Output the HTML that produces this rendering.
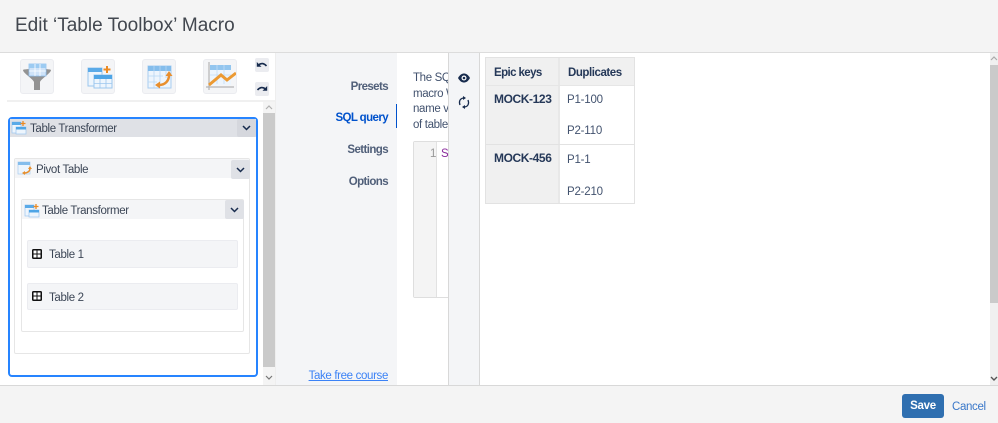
<!DOCTYPE html>
<html><head><meta charset="utf-8">
<style>
html,body{margin:0;padding:0}
body{width:998px;height:423px;position:relative;overflow:hidden;background:#fff;font-family:"Liberation Sans",sans-serif;color:#42526e;font-size:11.5px;letter-spacing:-.35px}
.a{position:absolute;box-sizing:border-box}
.t{position:absolute;white-space:nowrap;line-height:16px;margin-top:1px}
.n{font-weight:bold;letter-spacing:-.6px;color:#505f79}
.d{color:#3c4656}
.tb{position:absolute;width:34px;height:35px;background:#f4f5f7;border:1px solid #ebecf0;border-radius:3px;box-sizing:border-box}
.tb svg,.ub svg{display:block}
.ub{position:absolute;left:255px;width:14px;height:14px;background:#ebecf0;border-radius:2px}
.cb{position:absolute;width:19px;background:#dfe1e6;border-radius:2px}
.cb svg{position:absolute;left:5px;top:50%;margin-top:-3px}
</style></head><body>

<!-- Header -->
<div class="a" style="left:0;top:0;width:998px;height:53px;background:#f4f4f4;border-bottom:1px solid #dcdcdc"></div>
<div class="t" style="left:15px;top:13px;font-size:19px;line-height:24px;color:#42474f;letter-spacing:0">Edit ‘Table Toolbox’ Macro</div>

<!-- Toolbar -->
<div class="tb" style="left:20px;top:59px"><svg width="32" height="33" viewBox="0 0 32 33"><path d="M2 10C2 8.500 30 8.500 30 10C30 13 20 19 19 22V30H13V22C12 19 2 13 2 10Z" fill="#939393"/><rect x="8" y="4" width="17" height="12" fill="#cfe3f8" stroke="#8fc0ee" stroke-width=".8"/><rect x="8" y="4" width="17" height="4" fill="#9ccbf2"/><path d="M14 4V16M19 4V16M8 11H25" stroke="#fff" stroke-width=".8"/></svg></div>
<div class="tb" style="left:81px;top:59px"><svg width="32" height="33" viewBox="0 0 32 33"><rect x="6" y="8" width="14" height="18" fill="#edf5fd" stroke="#9cc6ee"/><rect x="6" y="8" width="14" height="4" fill="#5aaae8"/><rect x="12" y="15" width="18" height="13" fill="#edf5fd" stroke="#9cc6ee"/><rect x="12" y="15" width="18" height="4" fill="#4ea5e6"/><path d="M18 19V28M24 19V28M12 23.500H30" stroke="#9cc6ee" stroke-width=".8"/><path d="M25 6V13M21.500 9.500H28.500" stroke="#ea8a24" stroke-width="2"/></svg></div>
<div class="tb" style="left:142px;top:59px"><svg width="32" height="33" viewBox="0 0 32 33"><rect x="5" y="6" width="23" height="22" fill="#edf5fd" stroke="#a9cdf0"/><rect x="5" y="6" width="23" height="5" fill="#84bdec"/><path d="M11 6V28M17 6V28M23 6V18M5 16H20M5 22H14" stroke="#b7d6f3" stroke-width=".8"/><path d="M26 15C26 21 22 25 16 25" fill="none" stroke="#e88f2e" stroke-width="2.500"/><path d="M26 11L22.500 16H29.500ZM12 25L17 21.500V28.500Z" fill="#e88f2e"/></svg></div>
<div class="tb" style="left:203px;top:59px"><svg width="32" height="33" viewBox="0 0 32 33"><path d="M5 2V30M2 27H30" stroke="#b5b5b5" stroke-width="1.200"/><rect x="6" y="5" width="21" height="20" fill="#edf5fd"/><rect x="6" y="5" width="21" height="5" fill="#93c6ef"/><path d="M13 5V24M20 5V24M6 15H27" stroke="#c2dcf5" stroke-width=".8"/><path d="M5 25L17 15L23 20L32 13" fill="none" stroke="#ec9a33" stroke-width="3"/></svg></div>
<div class="ub" style="top:58px"><svg width="14" height="14" viewBox="0 0 14 14"><path d="M3.500 7C6 4.800 9 5 11.500 8" fill="none" stroke="#172b4d" stroke-width="1.600"/><path d="M1.800 4V8.800H6.500Z" fill="#172b4d"/></svg></div>
<div class="ub" style="top:82px"><svg width="14" height="14" viewBox="0 0 14 14"><path d="M10.500 7C8 4.800 5 5 2.500 8" fill="none" stroke="#172b4d" stroke-width="1.600"/><path d="M12.200 4V8.800H7.500Z" fill="#172b4d"/></svg></div>
<div class="a" style="left:7px;top:100px;width:268px;height:2px;background:#f0f0f0"></div>

<!-- Left scrollbar -->
<div class="a" style="left:263px;top:102px;width:12px;height:283px;background:#f4f4f4"></div>
<div class="a" style="left:263px;top:113px;width:12px;height:254px;background:#cacaca"></div>
<svg class="a" style="left:265px;top:104px" width="8" height="6"><path d="M1 5L4 2L7 5" fill="none" stroke="#b0b0b0" stroke-width="1.200"/></svg>
<svg class="a" style="left:265px;top:375px" width="8" height="6"><path d="M1 1L4 4L7 1" fill="none" stroke="#777" stroke-width="1.200"/></svg>
<div class="a" style="left:275px;top:53px;width:1px;height:332px;background:#eee"></div>

<!-- Blue outer block -->
<div class="a" style="left:8px;top:117px;width:250px;height:260px;border:2px solid #2684ff;border-radius:4px;background:#fff"></div>
<div class="a" style="left:10px;top:119px;width:246px;height:18px;background:#dfe1e6"></div>
<svg class="a" style="left:11px;top:120px" width="16" height="15" viewBox="0 0 16 15"><rect x="1" y="2" width="9" height="11" fill="#edf5fd" stroke="#9cc6ee" stroke-width=".7"/><rect x="1" y="2" width="9" height="3" fill="#5aaae8"/><rect x="5" y="7" width="10" height="7" fill="#edf5fd" stroke="#9cc6ee" stroke-width=".7"/><rect x="5" y="7" width="10" height="2.500" fill="#4ea5e6"/><path d="M12 1V6M9.500 3.500H14.500" stroke="#ea8a24" stroke-width="1.300"/></svg>
<div class="t d" style="left:30px;top:120px">Table Transformer</div>
<div class="cb" style="left:237px;top:119px;height:18px;background:#d5d7dd"><svg width="9" height="6"><path d="M1 1L4.500 4.500L8 1" fill="none" stroke="#172b4d" stroke-width="1.500"/></svg></div>

<!-- Pivot -->
<div class="a" style="left:14px;top:158px;width:236px;height:196px;border:1px solid #e6e6e6;border-radius:2px"></div>
<div class="a" style="left:15px;top:159px;width:234px;height:19px;background:#f4f5f7"></div>
<svg class="a" style="left:17px;top:160px" width="16" height="16" viewBox="0 0 16 16"><rect x="1" y="2" width="12" height="12" fill="#edf5fd" stroke="#a9cdf0" stroke-width=".7"/><rect x="1" y="2" width="12" height="3" fill="#84bdec"/><path d="M13 8C13 11 11 13 7 13" fill="none" stroke="#e88f2e" stroke-width="1.500"/><path d="M13 6L11 9H15ZM5 13L8 11V15Z" fill="#e88f2e"/></svg>
<div class="t d" style="left:36px;top:161px">Pivot Table</div>
<div class="cb" style="left:231px;top:160px;height:19px"><svg width="9" height="6"><path d="M1 1L4.500 4.500L8 1" fill="none" stroke="#172b4d" stroke-width="1.500"/></svg></div>

<!-- Inner transformer -->
<div class="a" style="left:21px;top:199px;width:223px;height:133px;border:1px solid #e6e6e6;border-radius:2px"></div>
<div class="a" style="left:22px;top:200px;width:221px;height:19px;background:#f4f5f7"></div>
<svg class="a" style="left:24px;top:203px" width="16" height="15" viewBox="0 0 16 15"><rect x="1" y="2" width="9" height="11" fill="#edf5fd" stroke="#9cc6ee" stroke-width=".7"/><rect x="1" y="2" width="9" height="3" fill="#5aaae8"/><rect x="5" y="7" width="10" height="7" fill="#edf5fd" stroke="#9cc6ee" stroke-width=".7"/><rect x="5" y="7" width="10" height="2.500" fill="#4ea5e6"/><path d="M12 1V6M9.500 3.500H14.500" stroke="#ea8a24" stroke-width="1.300"/></svg>
<div class="t d" style="left:42px;top:202px">Table Transformer</div>
<div class="cb" style="left:225px;top:200px;height:19px"><svg width="9" height="6"><path d="M1 1L4.500 4.500L8 1" fill="none" stroke="#172b4d" stroke-width="1.500"/></svg></div>

<!-- Table blocks -->
<div class="a" style="left:27px;top:240px;width:211px;height:28px;background:#f4f5f7;border:1px solid #ebecf0;border-radius:2px"></div>
<svg class="a" style="left:32px;top:249px" width="10" height="10" viewBox="0 0 10 10"><rect width="10" height="10" rx="1.500" fill="#111"/><rect x="1.500" y="1.500" width="3" height="3" fill="#fff"/><rect x="5.500" y="1.500" width="3" height="3" fill="#fff"/><rect x="1.500" y="5.500" width="3" height="3" fill="#fff"/><rect x="5.500" y="5.500" width="3" height="3" fill="#fff"/></svg>
<div class="t d" style="left:49px;top:246px">Table 1</div>
<div class="a" style="left:27px;top:283px;width:211px;height:27px;background:#f4f5f7;border:1px solid #ebecf0;border-radius:2px"></div>
<svg class="a" style="left:32px;top:291px" width="10" height="10" viewBox="0 0 10 10"><rect width="10" height="10" rx="1.500" fill="#111"/><rect x="1.500" y="1.500" width="3" height="3" fill="#fff"/><rect x="5.500" y="1.500" width="3" height="3" fill="#fff"/><rect x="1.500" y="5.500" width="3" height="3" fill="#fff"/><rect x="5.500" y="5.500" width="3" height="3" fill="#fff"/></svg>
<div class="t d" style="left:49px;top:289px">Table 2</div>

<!-- Nav -->
<div class="a" style="left:276px;top:53px;width:121px;height:332px;background:#f4f5f7"></div>
<div class="t n" style="right:610px;top:78px">Presets</div>
<div class="t n" style="right:610px;top:109px;color:#0052cc">SQL query</div>
<div class="t n" style="right:610px;top:141px">Settings</div>
<div class="t n" style="right:610px;top:173px">Options</div>
<div class="a" style="left:396px;top:104px;width:1px;height:24px;background:#0052cc"></div>
<div class="t" style="right:610px;top:367px;color:#3b82f6;text-decoration:underline">Take free course</div>

<!-- SQL pane -->
<div class="a" style="left:397px;top:53px;width:51px;height:332px;overflow:hidden;background:#fff">
  <div class="t" style="left:16px;top:17px;line-height:15.700px;color:#42526e">The SQL query<br>macro Window<br>name values<br>of tables used</div>
  <div class="a" style="left:16px;top:88px;width:60px;height:157px;border:1px solid #dedede;border-radius:2px;background:#fff"></div>
  <div class="a" style="left:17px;top:89px;width:23px;height:155px;background:#f4f4f4;border-right:1px solid #e2e2e2"></div>
  <div class="t" style="left:33px;top:92px;color:#999">1</div>
  <div class="t" style="left:44px;top:92px;color:#8a2b9c">SELECT</div>
</div>

<!-- Preview strip -->
<div class="a" style="left:448px;top:53px;width:32px;height:332px;background:#f4f5f7;border-left:1px solid #d8d8d8;border-right:1px solid #d8d8d8"></div>
<svg class="a" style="left:458px;top:73px" width="12" height="10" viewBox="0 0 12 10"><path d="M0 5C2 1.500 4 .5 6 .5S10 1.500 12 5C10 8.500 8 9.500 6 9.500S2 8.500 0 5Z" fill="#172b4d"/><circle cx="6" cy="5" r="2.500" fill="#fff"/><circle cx="6" cy="5" r="1.300" fill="#172b4d"/></svg>
<svg class="a" style="left:458px;top:96px" width="12" height="13" viewBox="0 0 12 13"><path d="M2 9C.8 6 1.500 2.500 5.500 2" fill="none" stroke="#172b4d" stroke-width="1.300"/><path d="M10 4C11.200 7 10.500 10.500 6.500 11" fill="none" stroke="#172b4d" stroke-width="1.300"/><path d="M5 0V4L8 2ZM7 13V9L4 11Z" fill="#172b4d"/></svg>

<!-- Preview table -->
<div class="a" style="left:485px;top:57px;width:150px;height:147px;border:1px solid #e2e2e2;background:#fff"></div>
<div class="a" style="left:486px;top:58px;width:73px;height:145px;background:#f0f0f0"></div>
<div class="a" style="left:559px;top:58px;width:75px;height:27px;background:#f0f0f0"></div>
<div class="a" style="left:558px;top:58px;width:2px;height:145px;background:#e8e8e8"></div>
<div class="a" style="left:486px;top:85px;width:148px;height:1px;background:#e6e6e6"></div>
<div class="a" style="left:486px;top:144px;width:148px;height:1px;background:#e2e2e2"></div>
<div class="t n" style="left:494px;top:64px;color:#253858">Epic keys</div>
<div class="t n" style="left:568px;top:64px;color:#253858;letter-spacing:-.45px">Duplicates</div>
<div class="t n" style="left:494px;top:90px;color:#253858;font-size:12px;letter-spacing:-.4px">MOCK-123</div>
<div class="t n" style="left:494px;top:149px;color:#253858;font-size:12px;letter-spacing:-.4px">MOCK-456</div>
<div class="t" style="left:567px;top:91px;letter-spacing:-.2px">P1-100</div>
<div class="t" style="left:567px;top:122px;letter-spacing:-.2px">P2-110</div>
<div class="t" style="left:567px;top:151px;letter-spacing:-.2px">P1-1</div>
<div class="t" style="left:567px;top:183px;letter-spacing:-.2px">P2-210</div>

<!-- Right scrollbar -->
<div class="a" style="left:990px;top:53px;width:8px;height:332px;background:#f0f0f0"></div>
<div class="a" style="left:990px;top:65px;width:8px;height:238px;background:#cacaca"></div>
<svg class="a" style="left:990px;top:55px" width="8" height="6"><path d="M1 5L4 2L7 5" fill="none" stroke="#aaa" stroke-width="1.200"/></svg>
<svg class="a" style="left:990px;top:376px" width="8" height="6"><path d="M1 1L4 4L7 1" fill="none" stroke="#555" stroke-width="1.400"/></svg>

<!-- Footer -->
<div class="a" style="left:0;top:385px;width:998px;height:38px;background:#f4f4f4;border-top:1px solid #d8d8d8"></div>
<div class="a" style="left:902px;top:394px;width:42px;height:24px;background:#2f6fb0;border-radius:3px;color:#fff;font-weight:bold;text-align:center;line-height:24px;letter-spacing:-.3px;font-size:11.5px">Save</div>
<div class="t" style="left:952px;top:398px;color:#3a78c9">Cancel</div>
</body></html>
